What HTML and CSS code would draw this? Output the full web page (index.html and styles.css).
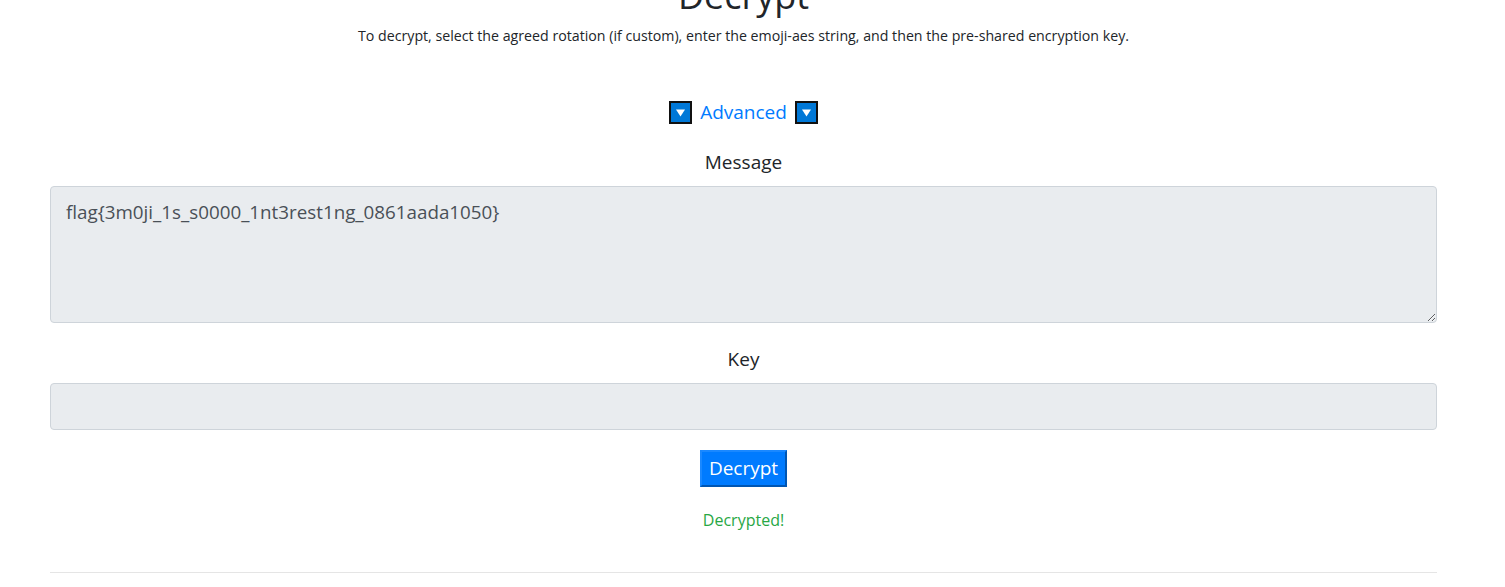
FILE: index.html
```html
<!DOCTYPE html>
<html lang="en">
<head>
<meta charset="utf-8">
<title>Decrypt</title>
<link rel="stylesheet" href="styles.css">
</head>
<body>
<main class="page">
  <h1 class="title">Decrypt</h1>
  <p class="subtitle">To decrypt, select the agreed rotation (if custom), enter the emoji-aes string, and then the pre-shared encryption key.</p>
  <div class="advanced">
    <span class="tri"><svg width="23" height="23" viewBox="0 0 23 23"><rect x="1" y="1" width="21" height="21" fill="#0078d7" stroke="#111" stroke-width="2"/><path d="M7 8.5 H16 L11.5 15.5 Z" fill="#fff"/></svg></span>
    <a class="adv-link" href="#">Advanced</a>
    <span class="tri"><svg width="23" height="23" viewBox="0 0 23 23"><rect x="1" y="1" width="21" height="21" fill="#0078d7" stroke="#111" stroke-width="2"/><path d="M7 8.5 H16 L11.5 15.5 Z" fill="#fff"/></svg></span>
  </div>
  <label class="field-label" for="msg">Message</label>
  <textarea id="msg" class="control area" readonly>flag{3m0ji_1s_s0000_1nt3rest1ng_0861aada1050}</textarea>
  <label class="field-label" for="key">Key</label>
  <input id="key" class="control input" type="text" readonly>
  <div class="actions"><button class="btn" type="button">Decrypt</button></div>
  <p class="status">Decrypted!</p>
  <hr class="rule">
</main>
</body>
</html>
```
FILE: styles.css
```css
* { box-sizing: border-box; }
html, body { margin: 0; padding: 0; background: #fff; }
body {
  font-family: "Open Sans", "Noto Sans", sans-serif;
  color: #212529;
  overflow: hidden;
}
.page {
  padding: 0 68px 0 50px;
  display: flex;
  flex-direction: column;
  align-items: stretch;
  text-align: center;
}
.title {
  font-size: 36px;
  font-weight: 500;
  line-height: 43px;
  margin: -26px 0 0 0;
}
.subtitle {
  font-size: 14.2px;
  line-height: 20px;
  margin: 9px 0 0 0;
}
.advanced {
  margin-top: 51px;
  display: flex;
  justify-content: center;
  align-items: center;
  gap: 8px;
  height: 30px;
}
.tri { display: block; width: 23px; height: 23px; }
.tri svg { display: block; }
.adv-link {
  color: #007bff;
  text-decoration: none;
  font-size: 19px;
  line-height: 30px;
}
.field-label {
  display: block;
  font-size: 19px;
  line-height: 30px;
  margin-top: 20px;
  margin-bottom: 9px;
}
.control {
  display: block;
  width: 100%;
  background: #e9ecef;
  border: 1px solid #ced4da;
  border-radius: 4px;
  font-family: inherit;
  font-size: 18.8px;
  color: #495057;
  padding: 10px 15px 8px 15px;
  margin: 0;
  outline: none;
}
.area {
  height: 137px;
  line-height: 30px;
  resize: vertical;
}
.input {
  height: 47px;
  margin-bottom: 0;
}
.area + .field-label { margin-top: 21px; margin-bottom: 9px; }
.actions {
  margin-top: 20px;
  display: flex;
  justify-content: center;
}
.btn {
  font-family: inherit;
  font-size: 19px;
  line-height: 27px;
  color: #fff;
  background: #007bff;
  border: 2px solid #006ae0;
  border-top-color: #1a88ff;
  border-left-color: #1a88ff;
  border-right-color: #0056b3;
  border-bottom-color: #0056b3;
  padding: 3px 7px 3px 7px;
  border-radius: 0;
}
.status {
  color: #28a745;
  font-size: 16px;
  line-height: 24px;
  margin: 21px 0 0 0;
}
.rule {
  width: 100%;
  border: 0;
  border-top: 1px solid rgba(0,0,0,.1);
  margin: 40px 0 0 0;
}
```
